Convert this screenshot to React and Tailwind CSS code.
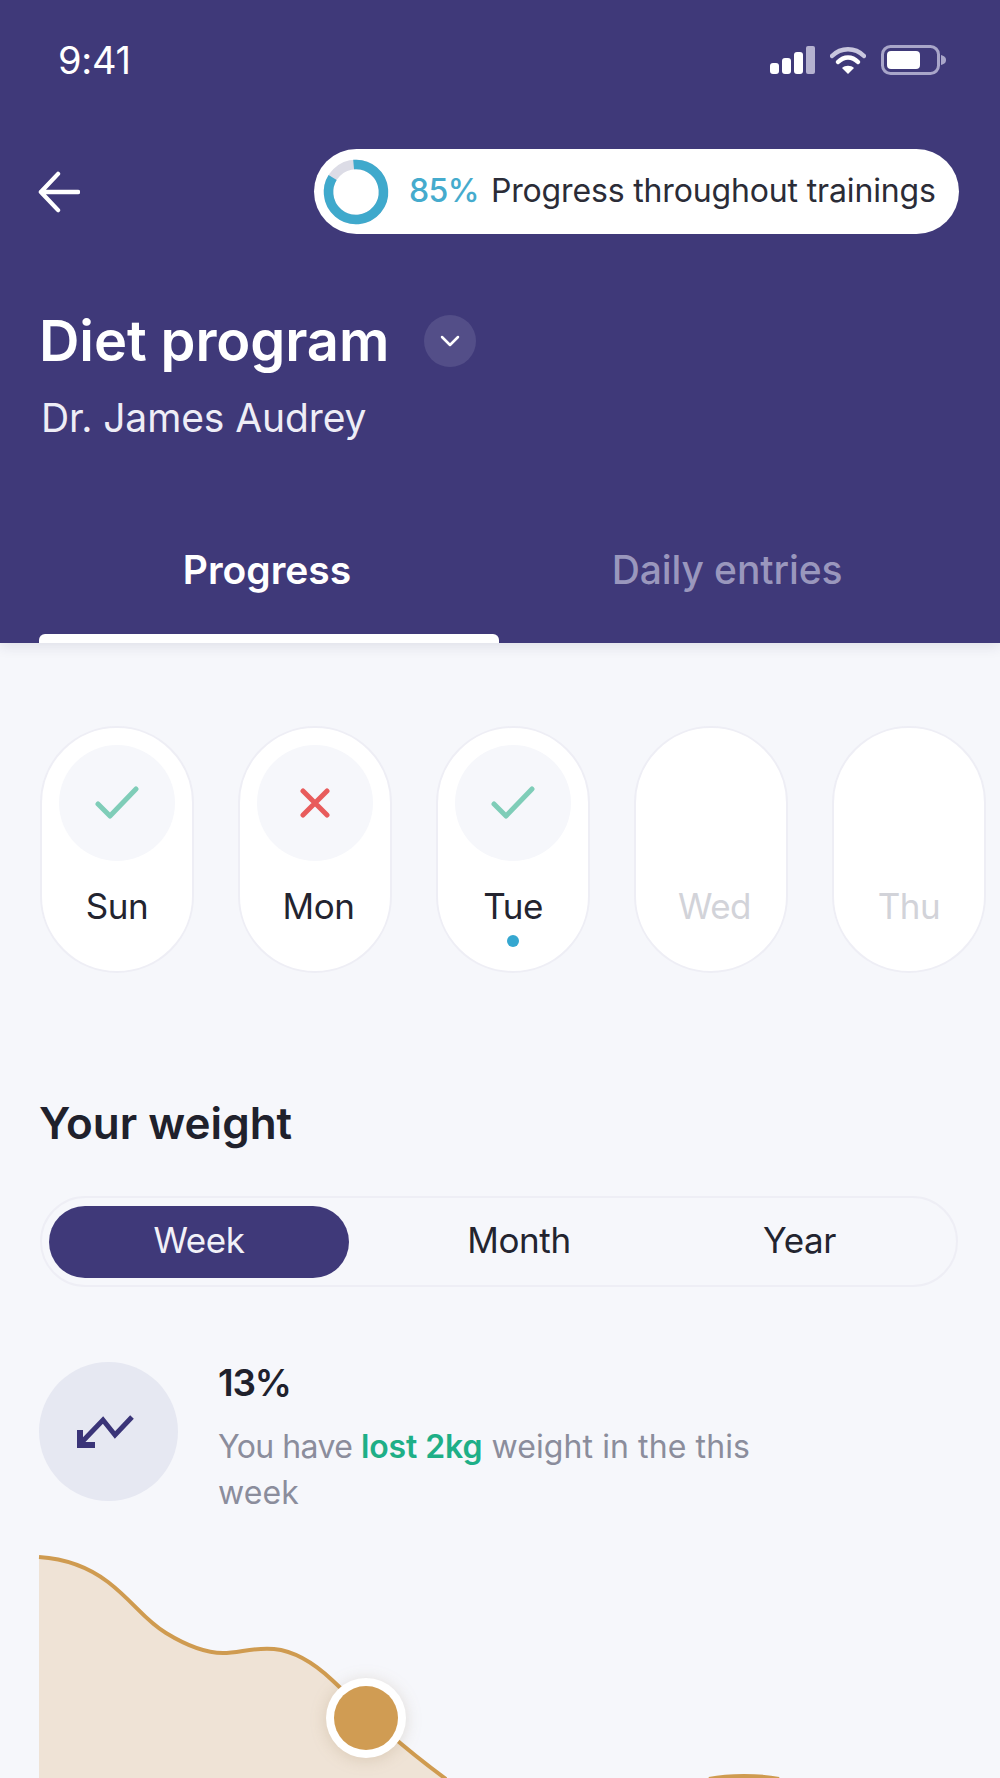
import React from "react";

const Check = () => (
  <svg width="44" height="34" viewBox="0 0 44 34" fill="none">
    <path d="M3 18 L15 30 L41 3" stroke="#7fcdb8" strokeWidth="5" strokeLinecap="round" strokeLinejoin="round" />
  </svg>
);
const Cross = () => (
  <svg width="30" height="30" viewBox="0 0 30 30" fill="none">
    <path d="M3 3 L27 27 M27 3 L3 27" stroke="#e85c5c" strokeWidth="5" strokeLinecap="round" />
  </svg>
);

function Day({ label, icon, dot, muted, nudge }) {
  return (
    <div className="w-[154px] h-[247px] shrink-0 rounded-[77px] bg-white border-2 border-[#eeeef5] flex flex-col items-center pt-[17px]">
      <div className={`w-[116px] h-[116px] rounded-full flex items-center justify-center ${icon ? "bg-[#f6f7fb]" : ""}`}>
        {icon === "check" && <Check />}
        {icon === "cross" && <Cross />}
      </div>
      <div className={`mt-[23px] text-[35px] leading-[44px] tracking-[-0.5px] ${nudge ? "pl-[7px]" : ""} ${muted ? "text-[#d2d3d9]" : "text-[#23242f]"}`}>{label}</div>
      {dot && <div className="mt-[7px] w-[12px] h-[12px] rounded-full bg-[#35a7d0]" />}
    </div>
  );
}

export default function App() {
  return (
    <div className="w-[1000px] h-[1778px] overflow-hidden bg-[#f6f7fb]" style={{ fontFamily: "Inter, 'Open Sans', sans-serif" }}>
      <header className="h-[643px] bg-[#3f3979] shadow-[0_4px_12px_rgba(40,40,80,0.10)] relative flex flex-col">
        <div className="flex items-center justify-between pl-[58px] pr-[53px] pt-[38px] h-[82px]">
          <span className="text-white text-[38px] leading-[42px] tracking-[-0.3px]">9:41</span>
          <div className="flex items-center gap-[15px]">
            <svg width="45" height="30" viewBox="0 0 45 30" fill="none">
              <rect x="0" y="18" width="9" height="11" rx="3" fill="white" />
              <rect x="12" y="13" width="9" height="16" rx="3" fill="white" />
              <rect x="24" y="7" width="9" height="22" rx="3" fill="white" />
              <rect x="36" y="1" width="9" height="28" rx="2" fill="#b5b2d0" />
            </svg>
            <svg width="36" height="30" viewBox="0 0 36 30" fill="none">
              <path d="M2 11 C11 2 25 2 34 11" stroke="#c9c7de" strokeWidth="4.5" strokeLinecap="round" />
              <path d="M8 17 C14 11 22 11 28 17" stroke="white" strokeWidth="4.5" strokeLinecap="round" />
              <path d="M12 23 L18 29 L24 23 C21 20 15 20 12 23 Z" fill="white" />
            </svg>
            <svg width="66" height="30" viewBox="0 0 66 30" fill="none">
              <rect x="1.5" y="1.5" width="56" height="27" rx="8" stroke="#a9a6c9" strokeWidth="3" />
              <rect x="6" y="6" width="33" height="18" rx="4" fill="white" />
              <path d="M60 10 C64 11 65 13 65 15 C65 17 64 19 60 20 Z" fill="#a9a6c9" />
            </svg>
          </div>
        </div>

        <div className="flex items-center justify-between pl-[38px] pr-[41px] mt-[67px]">
          <svg width="42" height="42" viewBox="0 0 44 44" fill="none">
            <path d="M42 22 H3 M21 3 L3 22 L21 41" stroke="white" strokeWidth="4.5" strokeLinecap="round" strokeLinejoin="round" />
          </svg>
          <div className="w-[645px] h-[85px] bg-white rounded-[43px] flex items-center pl-[8px] pb-[2px]">
            <svg width="68" height="68" viewBox="0 0 68 68" fill="none" className="shrink-0 mt-[2px]">
              <circle cx="34" cy="34" r="27.5" stroke="#dcdce6" strokeWidth="9.5" />
              <circle cx="34" cy="34" r="27.5" stroke="#3fa9cc" strokeWidth="9.5" strokeDasharray="147 173" transform="rotate(-95 34 34)" />
            </svg>
            <span className="ml-[19px] text-[#45abcd] text-[32px] font-medium tracking-[-0.6px]">85%</span>
            <span className="ml-[12px] text-[#2b2c37] text-[32px] tracking-[-0.15px] whitespace-nowrap">Progress throughout trainings</span>
          </div>
        </div>

        <div className="flex items-center pl-[39px] mt-[75px]">
          <h1 className="text-white text-[56px] leading-[64px] font-semibold tracking-[-0.1px]">Diet program</h1>
          <div className="ml-[35px] w-[52px] h-[52px] rounded-full bg-[#534e88] flex items-center justify-center">
            <svg width="22" height="14" viewBox="0 0 22 14" fill="none">
              <path d="M3 3 L11 11 L19 3" stroke="white" strokeWidth="2.5" strokeLinecap="round" strokeLinejoin="round" />
            </svg>
          </div>
        </div>
        <div className="pl-[41px] mt-[22px] text-[#eeedf6] text-[39px] leading-[46px] tracking-[-0.1px]">Dr. James Audrey</div>

        <div className="flex mt-auto px-[39px] h-[100px] items-start">
          <div className="relative w-[460px] h-full flex justify-center pt-[4px] pr-[4px]">
            <span className="text-white text-[39px] leading-[46px] font-semibold">Progress</span>
            <div className="absolute left-0 right-0 bottom-0 h-[9px] bg-white rounded-t-[6px]" />
          </div>
          <div className="flex-1 flex justify-center pt-[4px] pr-[6px]">
            <span className="text-[#9a97bd] text-[39px] leading-[46px] font-medium tracking-[-0.1px]">Daily entries</span>
          </div>
        </div>
      </header>

      <section className="flex gap-[44px] pl-[40px] pt-[83px]">
        <Day label="Sun" icon="check" />
        <Day label="Mon" icon="cross" nudge />
        <Day label="Tue" icon="check" dot />
        <Day label="Wed" muted nudge />
        <Day label="Thu" muted />
      </section>

      <h2 className="ml-[39px] mt-[122px] text-[#20212c] text-[44px] leading-[56px] font-semibold">Your weight</h2>

      <div className="mx-[40px] mt-[45px] w-[918px] h-[91px] rounded-[46px] border-2 border-[#eeeef5] flex items-center pl-[7px] text-[35px] leading-[44px] tracking-[-0.4px] text-[#23242f]">
        <div className="w-[300px] h-[72px] rounded-[36px] bg-[#3f3979] text-[#f2f1f8] flex items-center justify-center pb-[4px]">Week</div>
        <div className="w-[340px] text-center pb-[4px]">Month</div>
        <div className="flex-1 text-center pr-[46px] pb-[4px]">Year</div>
      </div>

      <div className="flex ml-[39px] mt-[75px]">
        <div className="w-[139px] h-[139px] rounded-full bg-[#e6e8f2] flex items-center justify-center shrink-0">
          <svg width="58" height="34" viewBox="0 0 58 34" fill="none" className="mr-[7px]">
            <path d="M56 2 L39 20 L27 5 L4 29" stroke="#3a3478" strokeWidth="5" strokeLinejoin="miter" />
            <path d="M4 15 V30 H19" stroke="#3a3478" strokeWidth="6" />
          </svg>
        </div>
        <div className="ml-[40px] w-[560px]">
          <div className="text-[#20212c] text-[37px] leading-[42px] font-semibold tracking-[-1.2px]">13%</div>
          <p className="mt-[20px] text-[#8b8d9c] text-[32px] leading-[46px] tracking-[-0.1px]">
            <span className="tracking-[-0.55px]">You have </span><span className="text-[#1eaf87] font-semibold">lost 2kg</span><span className="tracking-[0.1px]"> weight in the this week</span>
          </p>
        </div>
      </div>

      <svg width="961" height="230" viewBox="0 0 961 230" fill="none" className="ml-[39px] mt-[39px] block overflow-visible">
        <path d="M0 2 C30 4 52 14 69 27 C95 47 105 65 127 78 C145 89 165 98 184 98 C200 98 215 92 235 94 C255 96 275 108 293 125 C320 150 345 178 407 224 C480 280 600 240 707 222 L961 300 L0 300 Z" fill="#efe3d6" />
        <path d="M0 2 C30 4 52 14 69 27 C95 47 105 65 127 78 C145 89 165 98 184 98 C200 98 215 92 235 94 C255 96 275 108 293 125 C320 150 345 178 407 224" stroke="#cf9b50" strokeWidth="4" />
        <path d="M670 224 C690 220 720 220 740 224" stroke="#cf9b50" strokeWidth="4" />
        <circle cx="327" cy="163" r="40" fill="white" style={{ filter: "drop-shadow(0 2px 8px rgba(120,90,40,0.18))" }} />
        <circle cx="327" cy="163" r="32" fill="#d09c53" />
      </svg>
    </div>
  );
}
